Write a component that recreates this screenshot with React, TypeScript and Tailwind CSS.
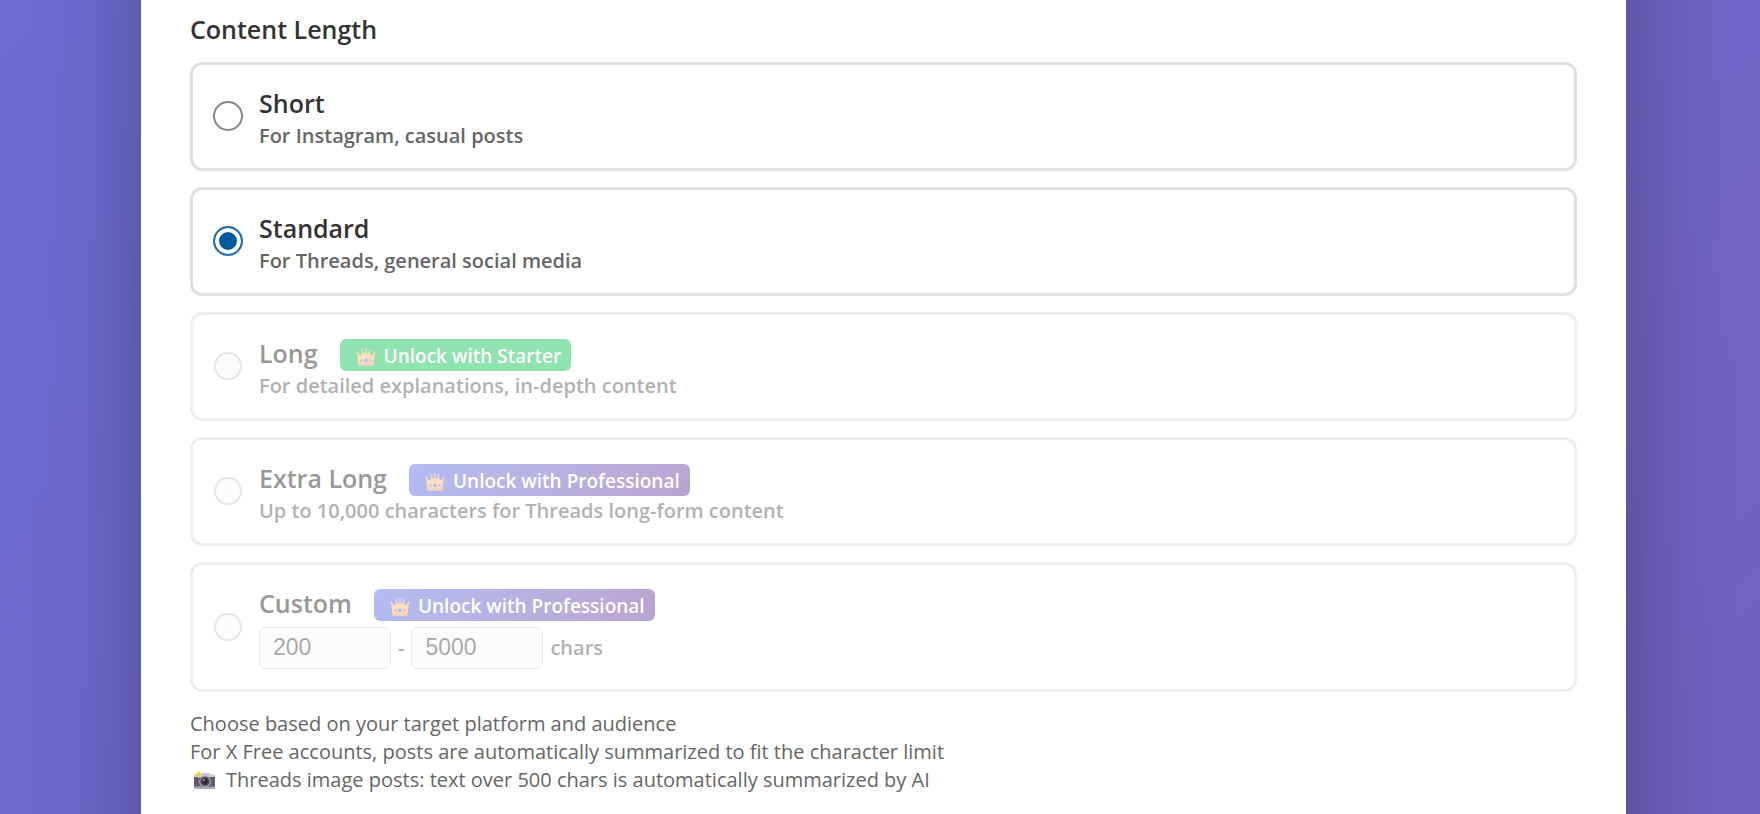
import { useState } from 'react';
import { clsx } from 'clsx';

interface LengthOption {
  id: string;
  title: string;
  description?: string;
  plan?: 'Starter' | 'Professional';
}

const OPTIONS: LengthOption[] = [
  { id: 'short', title: 'Short', description: 'For Instagram, casual posts' },
  { id: 'standard', title: 'Standard', description: 'For Threads, general social media' },
  { id: 'long', title: 'Long', description: 'For detailed explanations, in-depth content', plan: 'Starter' },
  {
    id: 'extra-long',
    title: 'Extra Long',
    description: 'Up to 10,000 characters for Threads long-form content',
    plan: 'Professional',
  },
  { id: 'custom', title: 'Custom', plan: 'Professional' },
];

function CrownIcon() {
  return (
    <svg viewBox="0 0 20 18" className="mt-0.5 h-[18px] w-5 shrink-0" aria-hidden="true">
      <path d="M1 4.600 5 7.600 6.600 3 8.800 6.200 10 1.600 11.200 6.200 13.400 3 15 7.600 19 4.600 17.400 17.400H2.600Z" fill="#fbb878" />
      <path d="M2.300 8.400 5 7.600 8.800 6.200 10 4l1.200 2.200L15 7.600l2.700.8-.9 6.600H3.200Z" fill="#fdc088" />
      <path d="M2.300 15h15.400l-.3 2.400H2.600Z" fill="#f9a877" />
      <circle cx="1.300" cy="4.400" r="1" fill="#fdb56a" />
      <circle cx="6.400" cy="2.600" r="1" fill="#fdb56a" />
      <circle cx="10" cy="1.400" r="1.100" fill="#fdb56a" />
      <circle cx="13.600" cy="2.600" r="1" fill="#fdb56a" />
      <circle cx="18.700" cy="4.400" r="1" fill="#fdb56a" />
      <circle cx="10" cy="12.400" r="2" fill="#4a8cff" />
      <circle cx="5.400" cy="12.400" r="1.200" fill="#f0508a" />
      <circle cx="14.600" cy="12.400" r="1.200" fill="#f0508a" />
    </svg>
  );
}

function CameraIcon() {
  return (
    <svg viewBox="0 0 23 18" className="h-[18px] w-[23px] shrink-0" aria-hidden="true">
      <path d="M8 3.6 9.6 1.8h6.2l1.4 1.8H21q1 0 1 1V7H1V4.600q0-1 1-1Z" fill="#c9c6d3" />
      <path d="M1 6h21v10.200q0 1.200-1.200 1.200H2.200Q1 17.400 1 16.200Z" fill="#625b70" />
      <path d="M1 15.600h21v.8q0 1-1.200 1H2.200q-1.200 0-1.200-1Z" fill="#aaa4b6" />
      <circle cx="12" cy="10.400" r="5.900" fill="#aaa4b8" />
      <circle cx="12" cy="10.400" r="4.700" fill="#51485f" />
      <circle cx="12" cy="10.400" r="2.800" fill="#2c2438" />
      <circle cx="10.900" cy="9" r="1.100" fill="#a99fbd" />
      <path d="M5.600 0Q6.200 2.900 9.200 3.500 6.200 4.200 5.600 7 5 4.200 2 3.500 5 2.900 5.600 0Z" fill="#f9c23c" stroke="#f9d56c" />
    </svg>
  );
}

function PlanBadge({ plan }: { plan: 'Starter' | 'Professional' }) {
  return (
    <span
      className={clsx(
        'flex h-8 items-center gap-2 rounded-md pt-0.5 pr-2.5 pl-4 text-[19px] text-white',
        plan === 'Starter' ? 'bg-[#22c95f]' : 'bg-linear-135 from-[#667eea] to-[#764ba2]',
      )}
    >
      <CrownIcon />
      Unlock with {plan}
    </span>
  );
}

function RangeInput({ label, value }: { label: string; value: number }) {
  return (
    <input
      type="number"
      aria-label={label}
      defaultValue={value}
      disabled
      className="h-[42px] w-[132px] rounded-md border border-[#d5d5d5] bg-[#fafafa] px-[13px] pb-0.5 font-['Liberation_Sans',sans-serif] text-[23px] font-normal text-[#545454]"
    />
  );
}

function OptionCard({ option, checked, onSelect }: { option: LengthOption; checked: boolean; onSelect: () => void }) {
  const locked = Boolean(option.plan);

  return (
    <div
      className={clsx(
        'flex items-center gap-4 rounded-xl border-3 border-[#e0e0e0] px-5 pt-[19px] pb-[18px] font-semibold',
        locked && 'opacity-50',
      )}
    >
      <input
        type="radio"
        id={option.id}
        name="content-length"
        checked={checked}
        disabled={locked}
        onChange={onSelect}
        className={clsx(
          'mb-0.5 shrink-0 appearance-none rounded-full border-2 border-[#868686]',
          'checked:border-[#1f6fab] checked:bg-[#005a9e] checked:shadow-[inset_0_0_0_4px_white]',
          'disabled:border-[#cfcfcf] disabled:bg-[#f8f8f8]',
          locked ? 'mx-px size-7' : 'size-[30px]',
        )}
      />
      <div>
        <label htmlFor={option.id} className="block">
          <span className="flex min-h-[37px] items-start gap-[22px] pt-[5px] text-[25px] leading-[29px] text-[#333]">
            {option.title}
            {option.plan && <PlanBadge plan={option.plan} />}
          </span>
          {option.description && (
            <span className="block pt-px text-[20px] leading-7 text-[#666]">{option.description}</span>
          )}
        </label>
        {option.id === 'custom' && (
          <div className="flex items-center gap-[7px] pt-1.5 pb-0.5 text-[20px] text-[#666]">
            <RangeInput label="Minimum characters" value={200} />
            -
            <RangeInput label="Maximum characters" value={5000} />
            chars
          </div>
        )}
      </div>
    </div>
  );
}

export default function App() {
  const [selected, setSelected] = useState('standard');

  return (
    <div className="h-screen overflow-hidden bg-linear-135 from-[#6c6dd1] to-[#7160be] pr-[134px] pl-[141px] font-['Open_Sans','Noto_Sans',sans-serif]">
      {/* card runs past both ends of the window, so its shadow stays even */}
      <main className="-my-32 bg-white px-[49px] py-32 shadow-[0_32px_96px_rgba(0,0,0,0.3)]">
        <form className="min-h-screen pt-3">
          <fieldset>
            <legend className="pb-4 text-[25px] leading-[34px] font-semibold text-[#333]">Content Length</legend>
            <div className="flex flex-col gap-4">
              {OPTIONS.map((option) => (
                <OptionCard
                  key={option.id}
                  option={option}
                  checked={selected === option.id}
                  onSelect={() => setSelected(option.id)}
                />
              ))}
            </div>
          </fieldset>
          <div className="pt-[18px] text-[20px] leading-7 text-[#666]">
            <p>Choose based on your target platform and audience</p>
            <p>For X Free accounts, posts are automatically summarized to fit the character limit</p>
            <p className="flex items-center gap-2.5 pl-[3px]">
              <CameraIcon />
              Threads image posts: text over 500 chars is automatically summarized by AI
            </p>
          </div>
        </form>
      </main>
    </div>
  );
}
